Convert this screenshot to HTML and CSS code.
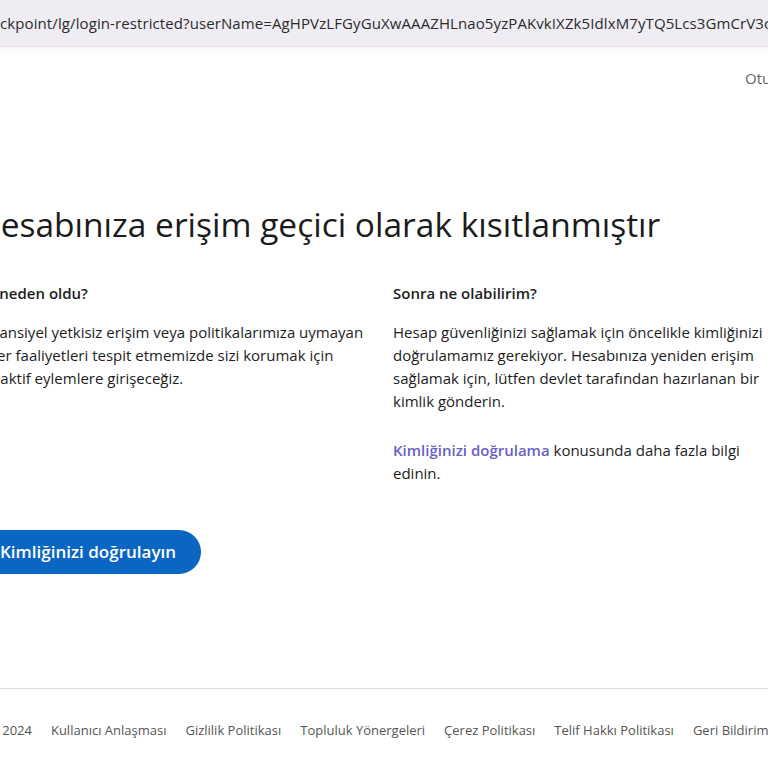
FILE: index.html
```html
<!DOCTYPE html>
<html lang="tr">
<head>
<meta charset="utf-8">
<title>Hesabınıza erişim geçici olarak kısıtlanmıştır</title>
<link rel="stylesheet" href="styles.css">
</head>
<body>

<div class="addressbar">
  <span class="url">ckpoint/lg/login-restricted?userName=AgHPVzLFGyGuXwAAAZHLnao5yzPAKvkIXZk5IdlxM7yTQ5Lcs3GmCrV3cKq</span>
</div>

<div class="page">
  <div class="topnav">
    <a class="signout" href="#">Oturumu kapat</a>
  </div>

  <div class="content">
    <h1>Hesabınıza erişim geçici olarak kısıtlanmıştır</h1>

    <div class="cols">
      <div class="col">
        <h2>Bu neden oldu?</h2>
        <p>Potansiyel yetkisiz erişim veya politikalarımıza uymayan diğer faaliyetleri tespit etmemizde sizi korumak için proaktif eylemlere girişeceğiz.</p>
      </div>
      <div class="col">
        <h2>Sonra ne olabilirim?</h2>
        <p>Hesap güvenliğinizi sağlamak için öncelikle kimliğinizi doğrulamamız gerekiyor. Hesabınıza yeniden erişim sağlamak için, lütfen devlet tarafından hazırlanan bir kimlik gönderin.</p>
        <p><a class="link" href="#">Kimliğinizi doğrulama</a> konusunda daha fazla bilgi edinin.</p>
      </div>
    </div>

    <a class="btn" href="#">Kimliğinizi doğrulayın</a>
  </div>

  <div class="footer">
    <ul>
      <li>© 2024</li>
      <li><a href="#">Kullanıcı Anlaşması</a></li>
      <li><a href="#">Gizlilik Politikası</a></li>
      <li><a href="#">Topluluk Yönergeleri</a></li>
      <li><a href="#">Çerez Politikası</a></li>
      <li><a href="#">Telif Hakkı Politikası</a></li>
      <li><a href="#">Geri Bildirim Gönder</a></li>
    </ul>
  </div>
</div>

</body>
</html>
```

FILE: styles.css
```css
html, body {margin:0; padding:0; background:#fff; overflow:hidden;}
body {font-family: "Open Sans", "Noto Sans", sans-serif; color:#1d1d1d;}
a {text-decoration:none; color:inherit;}

.addressbar {height:46px; background:#efedf3; border-bottom:1px solid #e7dbe8; white-space:nowrap; overflow:hidden; display:flex; align-items:center;}
.url {font-size:15px; color:#2b2b2b; letter-spacing:0.1px;}

.page {margin-left:-24px; width:840px; background:linear-gradient(#fbf4fb, #fff 6px);}

.topnav {display:flex; padding:21px 0 0 769px; height:40px; box-sizing:border-box; white-space:nowrap;}
.signout {font-size:15px; color:#666;}

.content {padding-top:115px; padding-bottom:114px;}
h1 {margin:0 0 36px; font-size:33.5px; font-weight:400; color:#1b1b1b; line-height:44px; white-space:nowrap;}
.cols {display:flex; gap:22px;}
.col {width:395px;}
h2 {margin:0 0 16px; font-size:15px; font-weight:600; line-height:23px; color:#1d1d1d;}
p {margin:0 0 26px; font-size:15px; line-height:23px; color:#1d1d1d;}
.link {color:#6a5ec8; font-weight:600;}

.btn {display:inline-block; margin-top:19px; background:#0a66c2; color:#fff; font-size:17px; font-weight:600; line-height:44px; height:44px; padding:0 25px 0 24px; border-radius:22px;}

.footer {border-top:1px solid #dcdcdc;}
.footer ul {list-style:none; margin:0; padding:32px 0 0 12px; display:flex; gap:19px; white-space:nowrap; font-size:13px; color:#555; height:80px;}
```
